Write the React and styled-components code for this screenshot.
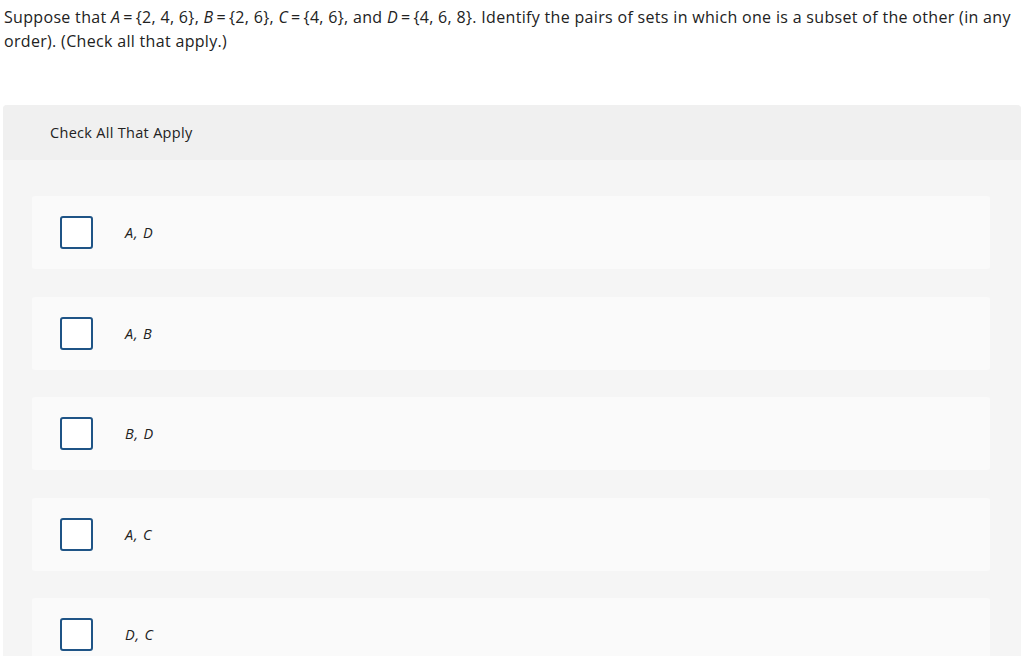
import React from "react";
import styled, { createGlobalStyle } from "styled-components";

const Global = createGlobalStyle`
  body {
    margin: 0;
    background: #fff;
    font-family: "Open Sans", "Liberation Sans", sans-serif;
    color: #1b1b1b;
  }
`;

const Page = styled.div`
  padding: 5px 3px 0 3px;
`;

const Prompt = styled.p`
  margin: 0 0 0 1px;
  font-size: 16px;
  letter-spacing: 0.32px;
  line-height: 24px;
  color: #222;
  i {
    font-style: italic;
  }
`;

const Panel = styled.div`
  margin-top: 52px;
  background: #f5f5f5;
  border-radius: 4px 4px 0 0;
  overflow: hidden;
`;

const Header = styled.div`
  height: 55px;
  background: #f0f0f0;
  display: flex;
  align-items: center;
  padding-left: 47px;
  font-size: 14.5px;
  letter-spacing: 0.3px;
  color: #222;
`;

const List = styled.div`
  display: flex;
  flex-direction: column;
  gap: 27.5px;
  padding: 36px 31px 0 29px;
`;

const Option = styled.label`
  height: 73px;
  background: #fafafa;
  border-radius: 3px;
  display: flex;
  align-items: center;
  padding-left: 28px;
  gap: 32px;
  cursor: pointer;
`;

const Box = styled.span`
  width: 29px;
  height: 29px;
  border: 2px solid #1f5486;
  border-radius: 3px;
  background: #fff;
  flex-shrink: 0;
`;

const Label = styled.span`
  font-size: 14.5px;
  font-style: italic;
  letter-spacing: 0.8px;
  color: #222;
`;

const options = ["A, D", "A, B", "B, D", "A, C", "D, C"];

const eq = "\u2009=\u2009";

export default function App() {
  return (
    <Page>
      <Global />
      <Prompt>
        Suppose that <i>A</i>{eq}{"{"}2, 4, 6{"}"}, <i>B</i>{eq}{"{"}2, 6{"}"}, <i>C</i>{eq}{"{"}4, 6{"}"}, and{" "}
        <i>D</i>{eq}{"{"}4, 6, 8{"}"}. Identify the pairs of sets in which one is a subset of the other (in any
        order). (Check all that apply.)
      </Prompt>
      <Panel>
        <Header>Check All That Apply</Header>
        <List>
          {options.map((o) => (
            <Option key={o}>
              <Box />
              <Label>{o}</Label>
            </Option>
          ))}
        </List>
      </Panel>
    </Page>
  );
}
